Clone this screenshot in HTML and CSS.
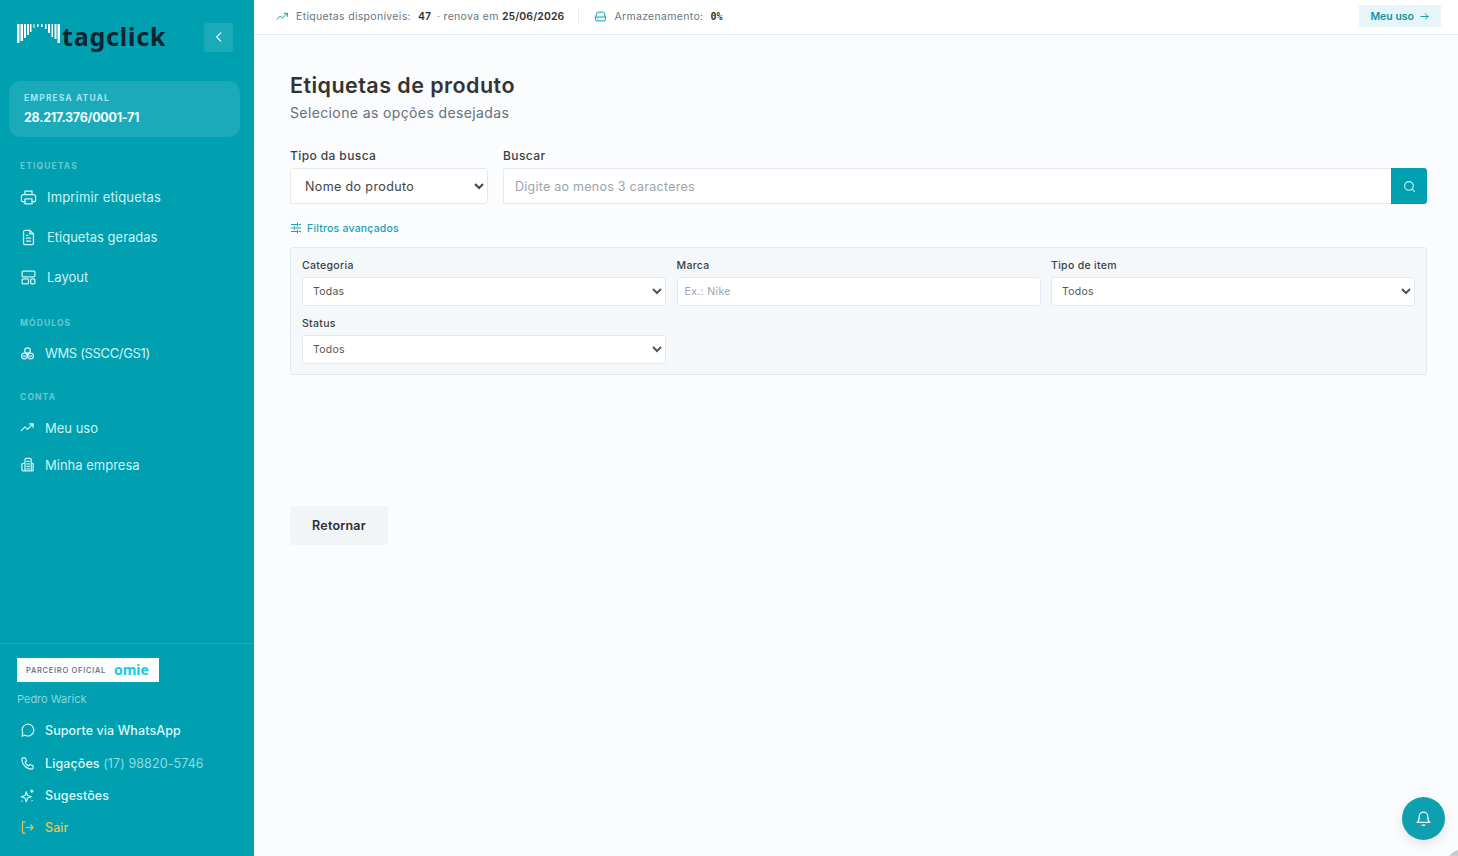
FILE: index.html
```html
<!DOCTYPE html>
<html lang="pt-BR">
<head>
    <meta charset="UTF-8">
    <meta name="viewport" content="width=device-width, initial-scale=1.0">
    <title>Etiquetas de produto</title>
    <link rel="stylesheet" href="styles.css">
</head>
<body>

<aside class="sidebar">
    <div class="brand">
        <div class="logo">
            <svg class="logo-bars" width="43" height="19" viewBox="0 0 43 19" fill="#fff">
                <path d="M0 0h2.500v19H0zM3.500 0h2.500v17H3.500zM7 0h2v14H7zM10 0h2v11H10zM13 0h1.500v8H13zM16.500 0h1v4h-1zM20 0h1.500v3H20zM24 0h1.500v3H24zM28 0h1.500v5H28zM31 0h2v9H31zM34.500 0h1.500v13h-1.500zM37.500 0h2v15h-2zM40.500 0h2.500v19h-2.500z"/>
            </svg>
            <span class="logo-text">tagclick</span>
        </div>
        <button class="collapse-btn" type="button">
            <svg width="14" height="14" viewBox="0 0 24 24" fill="none" stroke="currentColor" stroke-width="2" stroke-linecap="round" stroke-linejoin="round"><path d="M15 5l-7 7 7 7"/></svg>
        </button>
    </div>

    <div class="company">
        <div class="company-label">EMPRESA ATUAL</div>
        <div class="company-id">28.217.376/0001-71</div>
    </div>

    <div class="nav-title nav-title-first">ETIQUETAS</div>
    <a class="nav-item nav-wide nav-print">
        <svg class="nav-icon" viewBox="0 0 24 24"><path d="M7 8V3h10v5M7 18H4a2 2 0 0 1-2-2v-5a3 3 0 0 1 3-3h14a3 3 0 0 1 3 3v5a2 2 0 0 1-2 2h-3"/><path d="M7 14h10v7H7z"/></svg>
        Imprimir etiquetas
    </a>
    <a class="nav-item nav-wide">
        <svg class="nav-icon" viewBox="0 0 24 24"><path d="M14 2H7a2 2 0 0 0-2 2v16a2 2 0 0 0 2 2h10a2 2 0 0 0 2-2V7z"/><path d="M14 2v5h5M9 9h2M9 13h6M9 17h6"/></svg>
        Etiquetas geradas
    </a>
    <a class="nav-item nav-wide">
        <svg class="nav-icon" viewBox="0 0 24 24"><rect x="3" y="3" width="18" height="8" rx="1.500"/><rect x="3" y="14" width="9" height="7" rx="1.500"/><rect x="15" y="14" width="6" height="7" rx="1.500"/></svg>
        Layout
    </a>

    <div class="nav-title nav-title-modulos">MÓDULOS</div>
    <a class="nav-item nav-tight nav-wms">
        <svg class="nav-icon" viewBox="0 0 24 24"><circle cx="12" cy="7.500" r="4.500"/><circle cx="7" cy="16" r="4.500"/><circle cx="17" cy="16" r="4.500"/><path d="M12 12v3M9 10l3 2 3-2M5 16h4M15 16h4"/></svg>
        WMS (SSCC/GS1)
    </a>

    <div class="nav-title nav-title-conta">CONTA</div>
    <a class="nav-item nav-tight nav-short">
        <svg class="nav-icon" viewBox="0 0 24 24"><path d="M2 17l6-6 4 4 9-9M15 6h6v6"/></svg>
        Meu uso
    </a>
    <a class="nav-item nav-tight nav-short">
        <svg class="nav-icon" viewBox="0 0 24 24"><path d="M8 22V4a2 2 0 0 1 2-2h6a2 2 0 0 1 2 2v18M8 22h12a1 1 0 0 0 1-1V11a1 1 0 0 0-1-1h-2M8 10H5a2 2 0 0 0-2 2v8a2 2 0 0 0 2 2h3M11 7h4M11 11h4M11 15h4M11 19h4"/></svg>
        Minha empresa
    </a>

    <div class="side-footer">
        <div class="partner">
            <span class="partner-text">PARCEIRO OFICIAL</span>
            <span class="partner-logo">omie</span>
        </div>
        <div class="user-name">Pedro Warick</div>
        <a class="foot-link">
            <svg class="nav-icon" viewBox="0 0 24 24"><path d="M8 19.500A9.500 9.500 0 1 0 4.500 16L3 21z"/></svg>
            Suporte via WhatsApp
        </a>
        <a class="foot-link">
            <svg class="nav-icon" viewBox="0 0 24 24"><path d="M5 3h3.500l2 5-2.500 2a12 12 0 0 0 6 6l2-2.500 5 2V19a2 2 0 0 1-2 2C10 21 3 13 3 5a2 2 0 0 1 2-2z"/></svg>
            <span>Ligações <span class="phone">(17) 98820-5746</span></span>
        </a>
        <a class="foot-link">
            <svg class="nav-icon" viewBox="0 0 24 24"><path d="M10 6l2 6 6 2-6 2-2 6-2-6-6-2 6-2zM19 3v4M17 5h4M3 21h.5M19 20h.5"/></svg>
            Sugestões
        </a>
        <a class="foot-link foot-exit">
            <svg class="nav-icon" viewBox="0 0 24 24"><path d="M8 3H5a1 1 0 0 0-1 1v16a1 1 0 0 0 1 1h3M10 12h11M17 8l4 4-4 4"/></svg>
            Sair
        </a>
    </div>
</aside>

<div class="page">
    <header class="topbar">
        <svg class="top-icon" viewBox="0 0 24 24"><path d="M2 17l6-6 4 4 9-9M15 6h6v6"/></svg>
        <span class="top-muted">Etiquetas disponíveis:</span>
        <strong class="top-count">47</strong>
        <span class="top-muted">· renova em <strong>25/06/2026</strong></span>
        <span class="top-divider"></span>
        <svg class="top-icon" viewBox="0 0 24 24"><path d="M3 13l2.500-8a1.500 1.500 0 0 1 1.500-1h10a1.500 1.500 0 0 1 1.500 1L21 13M3 13h18v6a1 1 0 0 1-1 1H4a1 1 0 0 1-1-1zM7 16.500h.5"/></svg>
        <span class="top-muted">Armazenamento:</span>
        <strong class="top-count top-mono">0%</strong>
        <a class="usage-btn">Meu uso
            <svg width="11" height="11" viewBox="0 0 24 24" fill="none" stroke="currentColor" stroke-width="2" stroke-linecap="round" stroke-linejoin="round"><path d="M4 12h16M14 6l6 6-6 6"/></svg>
        </a>
    </header>

    <main class="content">
        <h1>Etiquetas de produto</h1>
        <p class="subtitle">Selecione as opções desejadas</p>

        <div class="search-row">
            <div class="field-type">
                <label class="field-label">Tipo da busca</label>
                <select class="input-main"><option>Nome do produto</option></select>
            </div>
            <div class="field-search">
                <label class="field-label">Buscar</label>
                <div class="search-box">
                    <input class="input-main input-search" type="text" placeholder="Digite ao menos 3 caracteres">
                    <button class="search-btn" type="button">
                        <svg width="13" height="13" viewBox="0 0 24 24" fill="none" stroke="currentColor" stroke-width="2" stroke-linecap="round"><circle cx="11" cy="11" r="8"/><path d="M17 17l4 4"/></svg>
                    </button>
                </div>
            </div>
        </div>

        <a class="filter-toggle">
            <svg width="12" height="12" viewBox="0 0 24 24" fill="none" stroke="currentColor" stroke-width="2" stroke-linecap="round"><path d="M3 5h10M18 5h3M3 12h3M11 12h10M3 19h10M18 19h3M15 2v6M8.500 9v6M15 16v6"/></svg>
            Filtros avançados
        </a>

        <div class="filters">
            <div>
                <label class="filter-label">Categoria</label>
                <select class="input-small"><option>Todas</option></select>
            </div>
            <div>
                <label class="filter-label">Marca</label>
                <input class="input-small input-text" type="text" placeholder="Ex.: Nike">
            </div>
            <div>
                <label class="filter-label">Tipo de item</label>
                <select class="input-small"><option>Todos</option></select>
            </div>
            <div>
                <label class="filter-label">Status</label>
                <select class="input-small"><option>Todos</option></select>
            </div>
        </div>

        <button class="back-btn" type="button">Retornar</button>
    </main>
</div>

<button class="bell-btn" type="button">
    <svg width="17" height="17" viewBox="0 0 24 24" fill="none" stroke="currentColor" stroke-width="1.800" stroke-linecap="round" stroke-linejoin="round"><path d="M6 9a6 6 0 0 1 12 0c0 5 1 7 3 8.500H3C5 16 6 14 6 9zM10 21.500h4"/></svg>
</button>
<div class="corner-mark"></div>

</body>
</html>
```

FILE: styles.css
```css
* { box-sizing: border-box; }
html, body { height: 100%; }
body { margin: 0; display: flex; height: 856px; overflow: hidden; font-family: Inter, "Open Sans", "Liberation Sans", sans-serif; background-color: #fafcfe; color: #333; }

.sidebar { width: 254px; flex-shrink: 0; height: 100%; display: flex; flex-direction: column; background-color: #00a0b0; color: #d4f5f8; }
.brand { display: flex; align-items: center; justify-content: space-between; height: 74px; padding: 0 21px 0 17px; }
.logo { display: flex; align-items: flex-start; margin-top: -2px; }
.logo-bars { margin-top: 1px; }
.logo-text { font-family: "Noto Sans", sans-serif; font-weight: 700; font-size: 25px; line-height: 27px; letter-spacing: 0.8px; color: #0c2430; margin-left: 2px; }
.collapse-btn { width: 29px; height: 29px; padding: 0; border: none; border-radius: 3px; background-color: #1aaab8; color: #e8fbfd; display: flex; align-items: center; justify-content: center; }

.company { margin: 7px 14px 0 9px; height: 56px; padding: 11px 15px; border-radius: 12px; background-color: #1aaaba; }
.company-label { font-size: 8.500px; font-weight: 700; letter-spacing: 1.100px; line-height: 12px; color: #a5e6ee; }
.company-id { font-size: 12.500px; font-weight: 700; line-height: 16px; margin-top: 6px; color: #f2fdfe; letter-spacing: -0.25px; }

.nav-title { font-size: 8.500px; font-weight: 700; letter-spacing: 1.100px; line-height: 12px; color: #66c8d3; padding-left: 20px; }
.nav-title-first { margin-top: 23px; }
.nav-title-modulos { margin-top: 20px; }
.nav-title-conta { margin-top: 18px; }

.nav-item { display: flex; align-items: center; font-size: 13px; height: 40px; padding-left: 20px; color: #cdf3f7; }
.nav-wide { gap: 10px; }
.nav-wide .nav-icon { width: 17px; height: 17px; }
.nav-print { letter-spacing: 0.17px; }
.nav-title-first + .nav-item { margin-top: 5px; }
.nav-title-modulos + .nav-item { margin-top: 4px; }
.nav-title-conta + .nav-item { margin-top: 6px; }
.nav-tight { gap: 10px; }
.nav-tight .nav-icon { width: 15px; height: 15px; stroke-width: 2; }
.nav-wms { letter-spacing: -0.35px; }
.nav-short { height: 37px; }
.nav-icon { width: 16px; height: 16px; flex-shrink: 0; fill: none; stroke: currentColor; stroke-width: 1.800; stroke-linecap: round; stroke-linejoin: round; }

.side-footer { margin-top: auto; border-top: 1px solid #1aaab9; padding: 14px 0 12px 17px; }
.partner { display: flex; align-items: center; width: 142px; height: 24px; padding-left: 9px; background-color: #fbfdfe; }
.partner-text { font-size: 7.500px; font-weight: 500; letter-spacing: 0.72px; color: #5e6a75; margin-top: 2px; }
.partner-logo { font-family: "Noto Sans", sans-serif; font-size: 14px; font-weight: 700; line-height: 14px; color: #1cc8e0; margin-left: 8px; }
.user-name { font-size: 11px; line-height: 14px; margin-top: 10px; margin-bottom: 9px; color: #84d6df; }
.foot-link { display: flex; align-items: center; gap: 10px; height: 32.300px; padding-left: 3px; font-size: 12.500px; font-weight: 500; letter-spacing: 0.1px; color: #dcf8fb; }
.foot-link .nav-icon { width: 15px; height: 15px; }
.phone { font-weight: 400; color: #8fdae3; }
.foot-exit { color: #e2c65c; }

.page { flex: 1; min-width: 0; display: flex; flex-direction: column; }
.topbar { height: 35px; flex-shrink: 0; display: flex; align-items: center; padding: 0 17px 2px 22px; background-color: #fff; border-bottom: 1px solid #e6ebf0; font-size: 10.500px; }
.top-icon { width: 13px; height: 13px; margin-right: 7px; fill: none; stroke: #00a0b0; stroke-width: 1.800; stroke-linecap: round; stroke-linejoin: round; }
.top-muted { color: #6b7480; letter-spacing: 0.32px; }
.top-muted strong { color: #333; font-weight: 600; letter-spacing: 0.1px; }
.top-count { margin: 0 6px 0 7px; font-weight: 600; color: #333; }
.top-mono { font-family: "DejaVu Sans Mono", monospace; font-size: 10px; }
.top-divider { width: 1px; height: 14px; margin: 0 15px 0 14px; background-color: #e6ebf0; }
.usage-btn { margin-left: auto; display: flex; align-items: center; gap: 5px; height: 22px; padding: 0 11px; border-radius: 2px; background-color: #e6f6f8; color: #0f93a5; font-weight: 600; }

.content { padding: 37px 31px 0 36px; }
h1 { margin: 0; font-size: 21.500px; line-height: 26px; font-weight: 600; letter-spacing: 0.45px; color: #333; }
.subtitle { margin: 5px 0 0; font-size: 14px; line-height: 20px; letter-spacing: 0.38px; color: #66707c; }

.search-row { display: flex; gap: 15px; margin-top: 25px; }
.field-type { width: 198px; flex-shrink: 0; }
.field-search { flex: 1; }
.field-label { display: block; font-size: 12px; line-height: 16px; font-weight: 500; letter-spacing: 0.4px; color: #3a3f45; margin-bottom: 4px; }
.input-main { width: 100%; height: 36px; border: 1px solid #e4e9ef; border-radius: 3px; background-color: #fff; font-family: inherit; font-size: 12.500px; letter-spacing: 0.38px; color: #444; padding: 0 0 0 10px; outline: none; }
.search-box { display: flex; }
.input-search { border-right: none; border-radius: 3px 0 0 3px; padding-left: 11px; letter-spacing: 0.25px; }
.input-search::placeholder { color: #9ca3ad; }
.search-btn { width: 36px; height: 36px; flex-shrink: 0; padding: 0; border: none; border-radius: 0 3px 3px 0; background-color: #00a0b0; color: #d4f5f8; display: flex; align-items: center; justify-content: center; }

.filter-toggle { display: inline-flex; align-items: center; gap: 5px; margin-top: 17px; height: 14px; font-size: 10.500px; font-weight: 500; letter-spacing: 0.2px; color: #1a9fb0; }
.filters { display: grid; grid-template-columns: repeat(3, 1fr); gap: 11px 10.500px; margin-top: 9px; padding: 11px 11px 10px; background-color: #f5f8fb; border: 1px solid #e4e9ef; border-radius: 3px; }
.filter-label { display: block; font-size: 10.500px; line-height: 14px; font-weight: 500; letter-spacing: 0.3px; color: #3a3f45; margin-bottom: 4px; }
.input-small { display: block; width: 100%; height: 29px; border: 1px solid #e4e9ef; border-radius: 3px; background-color: #fff; font-family: inherit; font-size: 10.500px; letter-spacing: 0.25px; color: #555; padding: 0 0 0 6px; outline: none; }
.input-text { padding-left: 7px; letter-spacing: 0.35px; }
.input-small::placeholder { color: #9ca3ad; }

.back-btn { display: block; width: 98px; height: 39px; margin-top: 131px; padding: 0; border: none; border-radius: 3px; background-color: #f2f5f8; font-family: inherit; font-size: 12.500px; font-weight: 600; letter-spacing: 0.2px; color: #2c2f33; }

.bell-btn { position: fixed; left: 1402px; top: 797px; width: 43px; height: 43px; padding: 0; border: none; border-radius: 50%; background-color: #0ea0b1; color: #eafcfe; display: flex; align-items: center; justify-content: center; box-shadow: 0 4px 12px rgba(0, 0, 0, 0.1); }
.corner-mark { position: fixed; left: 1448px; top: 850px; width: 24px; height: 24px; border-radius: 50%; background-color: #c9cccf; }
```
